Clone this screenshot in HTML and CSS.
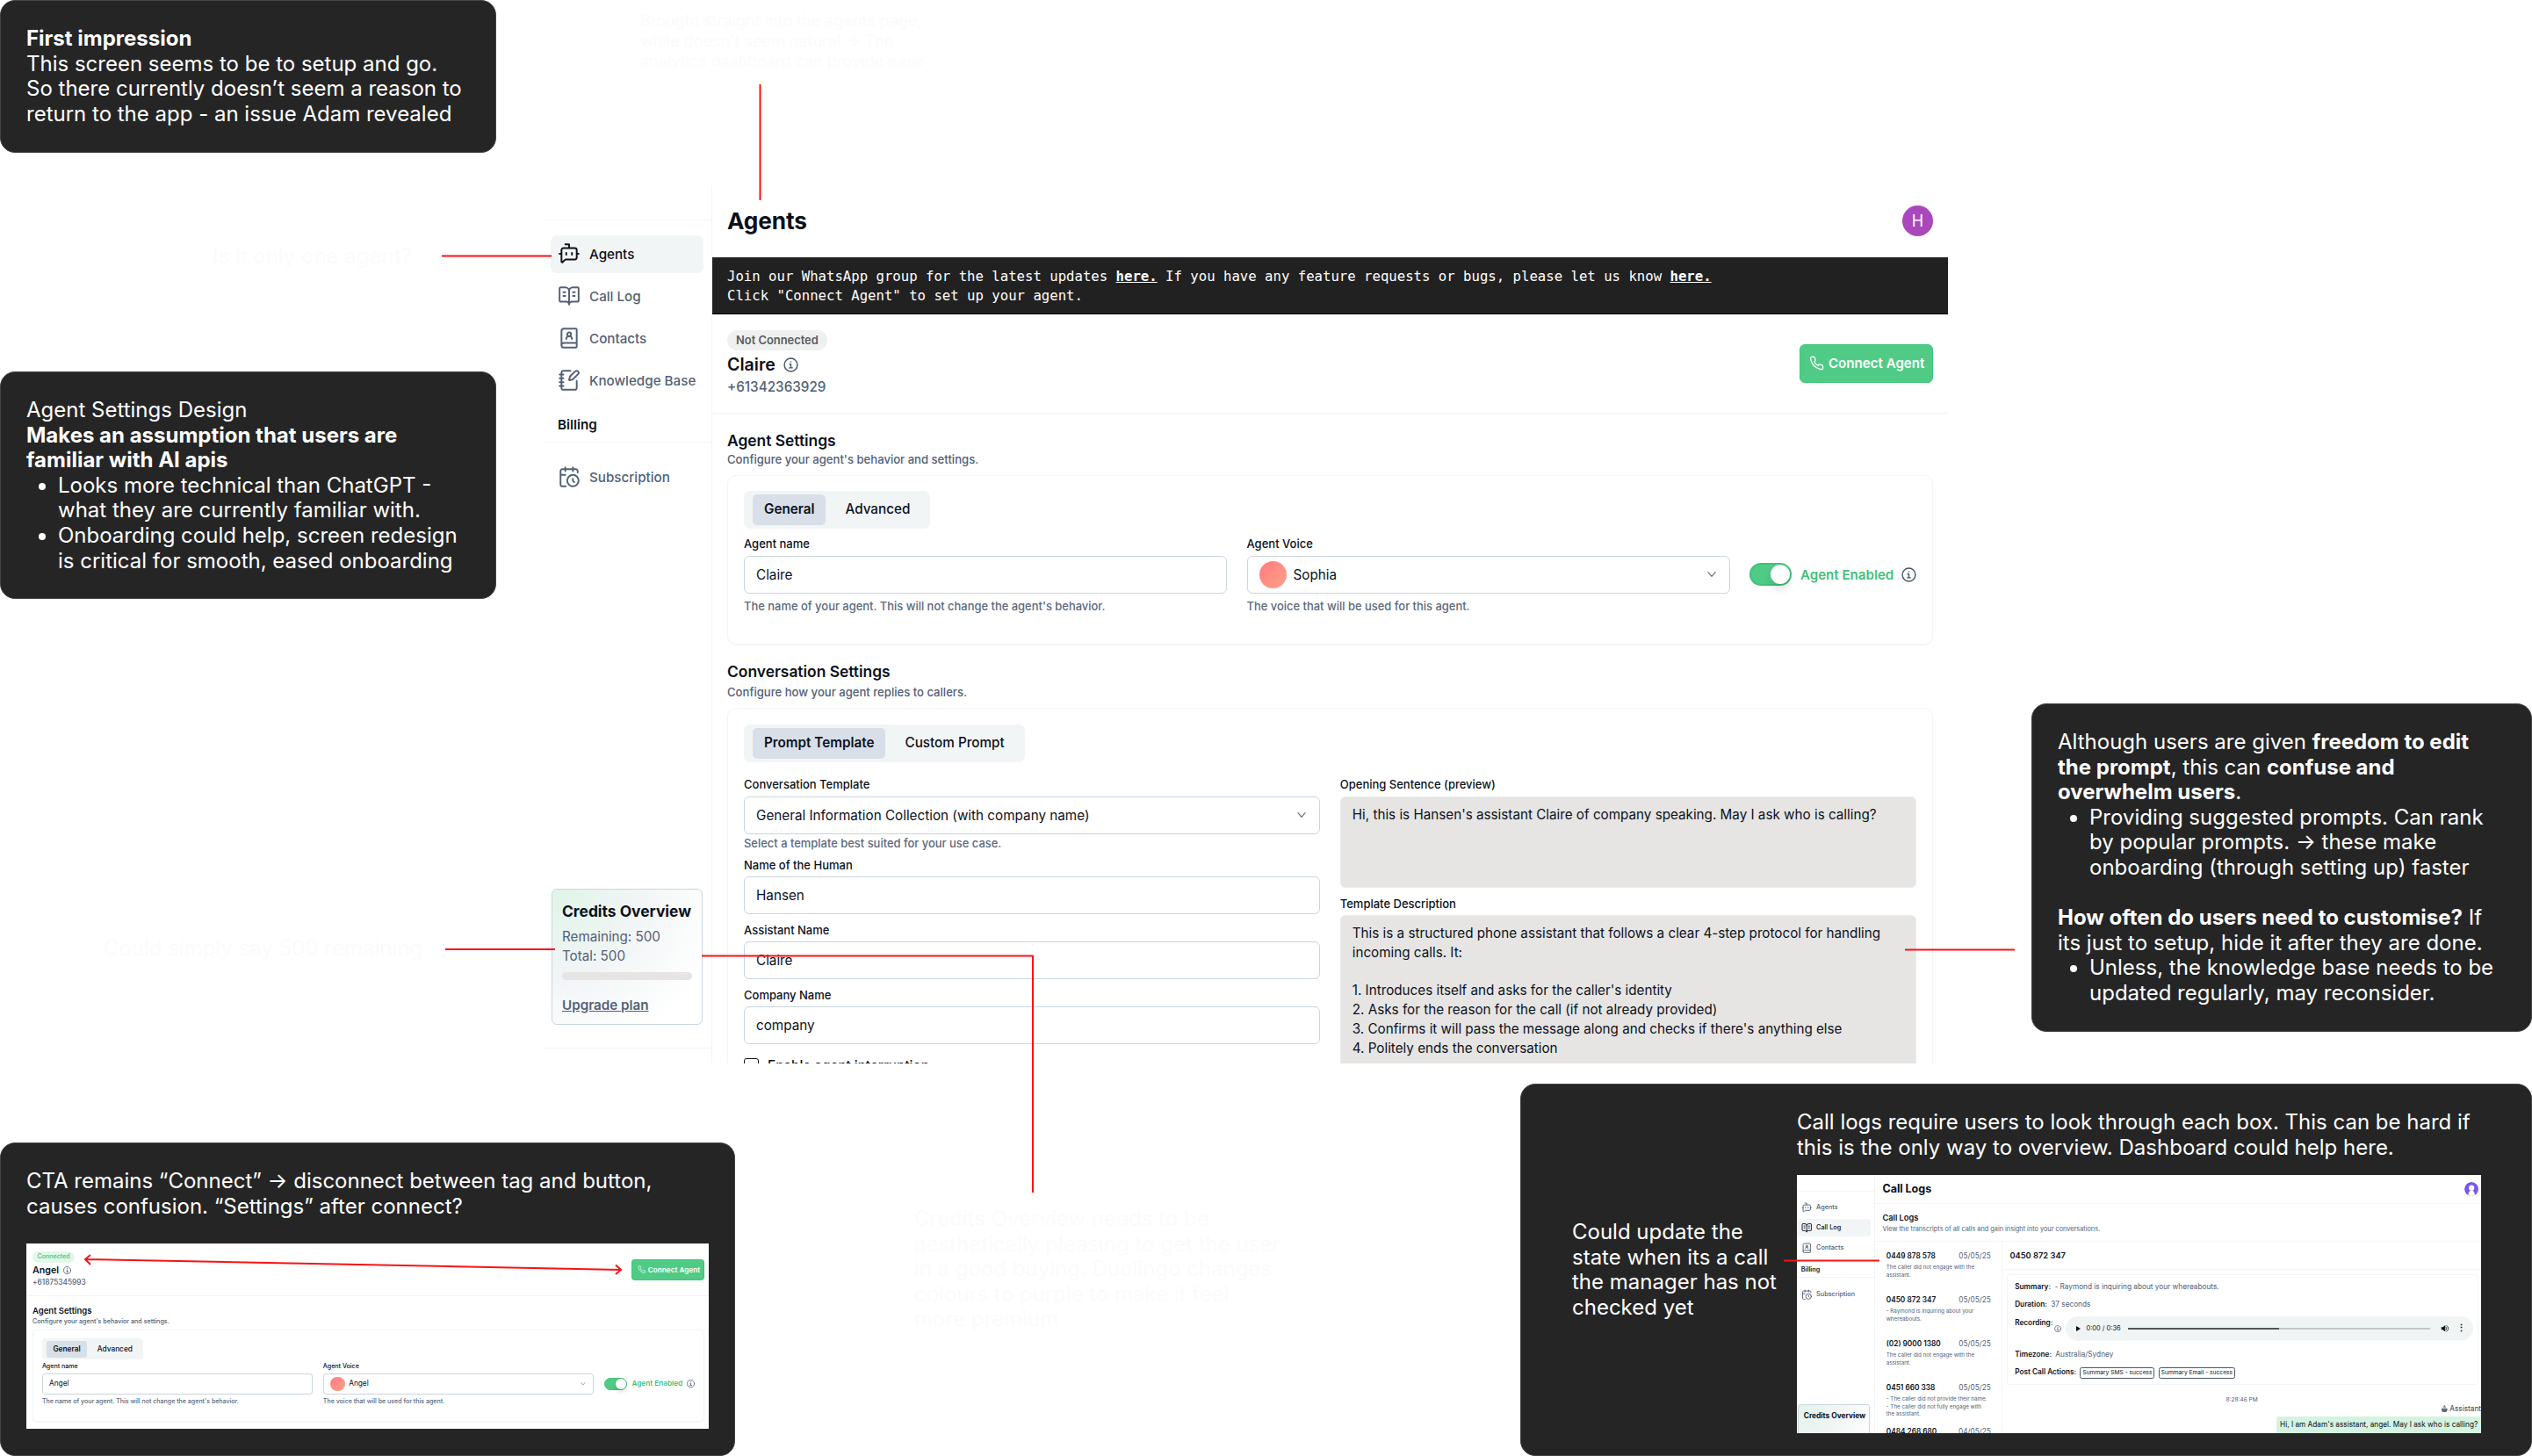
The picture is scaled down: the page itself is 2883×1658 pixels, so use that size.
FILE: index.html
```html
<!DOCTYPE html>
<html lang="en">
<head>
    <meta charset="UTF-8">
    <meta name="viewport" content="width=device-width, initial-scale=1.0">
    <title>Agents screen review</title>
    <link rel="stylesheet" href="styles.css">
</head>
<body>

<!-- icons -->
<svg class="sprite" xmlns="http://www.w3.org/2000/svg">
    <symbol id="bot" viewBox="0 0 24 24"><path d="M12 6V2H8M15 11v2M2 12h2M20 12h2M20 16a2 2 0 0 1-2 2H8.828a2 2 0 0 0-1.414.586l-2.202 2.202A.71.71 0 0 1 4 20.286V8a2 2 0 0 1 2-2h12a2 2 0 0 1 2 2zM9 11v2"/></symbol>
    <symbol id="book" viewBox="0 0 24 24"><path d="M12 7v14M16 12h2M16 8h2M3 18a1 1 0 0 1-1-1V4a1 1 0 0 1 1-1h5a4 4 0 0 1 4 4 4 4 0 0 1 4-4h5a1 1 0 0 1 1 1v13a1 1 0 0 1-1 1h-6a3 3 0 0 0-3 3 3 3 0 0 0-3-3zM6 12h2M6 8h2"/></symbol>
    <symbol id="contacts" viewBox="0 0 24 24"><path d="M15 13a3 3 0 1 0-6 0M4 19.5v-15A2.5 2.5 0 0 1 6.5 2H19a1 1 0 0 1 1 1v18a1 1 0 0 1-1 1H6.5a1 1 0 0 1 0-5H20"/><circle cx="12" cy="8" r="2"/></symbol>
    <symbol id="notebook" viewBox="0 0 24 24"><path d="M13.4 2H6a2 2 0 0 0-2 2v16a2 2 0 0 0 2 2h12a2 2 0 0 0 2-2v-7.4M2 6h4M2 10h4M2 14h4M2 18h4M21.378 5.626a1 1 0 1 0-3.004-3.004l-5.01 5.012a2 2 0 0 0-.506.854l-.837 2.87a.5.5 0 0 0 .62.62l2.87-.837a2 2 0 0 0 .854-.506z"/></symbol>
    <symbol id="calendar" viewBox="0 0 24 24"><path d="M21 7.5V6a2 2 0 0 0-2-2H5a2 2 0 0 0-2 2v14a2 2 0 0 0 2 2h3.5M16 2v4M8 2v4M3 10h5M17.5 17.5 16 16.3V14"/><circle cx="16" cy="16" r="6"/></symbol>
    <symbol id="phone" viewBox="0 0 24 24"><path d="M22 16.92v3a2 2 0 0 1-2.18 2 19.79 19.79 0 0 1-8.63-3.07 19.5 19.5 0 0 1-6-6 19.79 19.79 0 0 1-3.07-8.67A2 2 0 0 1 4.11 2h3a2 2 0 0 1 2 1.72 12.84 12.84 0 0 0 .7 2.81 2 2 0 0 1-.45 2.11L8.09 9.91a16 16 0 0 0 6 6l1.27-1.27a2 2 0 0 1 2.11-.45 12.84 12.84 0 0 0 2.81.7A2 2 0 0 1 22 16.92z"/></symbol>
    <symbol id="info" viewBox="0 0 24 24"><circle cx="12" cy="12" r="10.5"/><path d="M10 11h2v5.5M9.5 16.8h5M11.6 7.2h.8"/></symbol>
    <symbol id="chevron" viewBox="0 0 24 24"><path d="m5 8 7 8 7-8"/></symbol>
    <symbol id="volume" viewBox="0 0 24 24"><path d="M3 9v6h4l5 5V4L7 9z" fill="currentColor"/><path d="M15 8a5 5 0 0 1 0 8M17 4a9 9 0 0 1 0 16"/></symbol>
</svg>

<main class="board">

    <section class="note note-first">
        <p><b>First impression</b></p>
        <p>This screen seems to be to setup and go.<br>So there currently doesn’t seem a reason to<br>return to the app - an issue Adam revealed</p>
    </section>

    <section class="note note-settings">
        <p>Agent Settings Design</p>
        <p><b>Makes an assumption that users are<br>familiar with AI apis</b></p>
        <ul>
            <li>Looks more technical than ChatGPT -<br>what they are currently familiar with.</li>
            <li>Onboarding could help, screen redesign<br>is critical for smooth, eased onboarding</li>
        </ul>
    </section>

    <section class="note note-prompt">
        <p>Although users are given <b>freedom to edit<br>the prompt</b>, this can <b>confuse and<br>overwhelm users</b>.</p>
        <ul>
            <li>Providing suggested prompts. Can rank<br>by popular prompts. → these make<br>onboarding (through setting up) faster</li>
        </ul>
        <p class="spaced"><b>How often do users need to customise?</b> If<br>its just to setup, hide it after they are done.</p>
        <ul>
            <li>Unless, the knowledge base needs to be<br>updated regularly, may reconsider.</li>
        </ul>
    </section>

    <!-- white captions left over from the dark canvas -->
    <p class="ghost ghost-top">Brought straight into the agents page,<br>while doesn't seem natural → The<br>analytics dashboard can provide ease</p>
    <p class="ghost ghost-left">Is it only one agent?</p>
    <p class="ghost ghost-credits">Could simply say 500 remaining</p>
    <p class="ghost ghost-colour">Credits Overview needs to be<br>aesthetically pleasing to get the user<br>in a good buying. Duolingo changes<br>colours to purple to make it feel<br>more premium</p>

    <div class="app">
        <aside class="sidebar">
            <div class="side-top"></div>
            <nav class="nav">
                <a class="nav-item active"><svg class="icon"><use href="#bot"/></svg>Agents</a>
                <a class="nav-item"><svg class="icon"><use href="#book"/></svg>Call Log</a>
                <a class="nav-item"><svg class="icon"><use href="#contacts"/></svg>Contacts</a>
                <a class="nav-item"><svg class="icon"><use href="#notebook"/></svg>Knowledge Base</a>
            </nav>
            <div class="nav-head">Billing</div>
            <nav class="nav">
                <a class="nav-item"><svg class="icon"><use href="#calendar"/></svg>Subscription</a>
            </nav>
            <div class="credits">
                <h4>Credits Overview</h4>
                <p>Remaining: 500</p>
                <p>Total: 500</p>
                <div class="bar"></div>
                <a>Upgrade plan</a>
            </div>
            <div class="side-bottom"></div>
        </aside>

        <div class="content">
            <header class="topbar">
                <h1>Agents</h1>
                <span class="user">H</span>
            </header>
            <div class="banner">Join our WhatsApp group for the latest updates <b>here.</b> If you have any feature requests or bugs, please let us know <b>here.</b><br>Click "Connect Agent" to set up your agent.</div>

            <div class="agent-head">
                <div>
                    <span class="badge">Not Connected</span>
                    <div class="agent-name">Claire <svg class="info"><use href="#info"/></svg></div>
                    <div class="agent-phone">+61342363929</div>
                </div>
                <button class="connect"><svg class="icon"><use href="#phone"/></svg>Connect Agent</button>
            </div>

            <section class="settings">
                <h2>Agent Settings</h2>
                <p class="sub">Configure your agent's behavior and settings.</p>
                <div class="card card-agent">
                    <div class="tabs"><span class="tab on">General</span><span class="tab">Advanced</span></div>
                    <div class="row">
                        <div class="field">
                            <label>Agent name</label>
                            <div class="input">Claire</div>
                            <p class="help">The name of your agent. This will not change the agent's behavior.</p>
                        </div>
                        <div class="field">
                            <label>Agent Voice</label>
                            <div class="input"><i class="voice"></i>Sophia<svg class="chev"><use href="#chevron"/></svg></div>
                            <p class="help">The voice that will be used for this agent.</p>
                        </div>
                        <div class="enabled"><span class="toggle"></span>Agent Enabled<svg class="info"><use href="#info"/></svg></div>
                    </div>
                </div>
            </section>

            <section class="settings conversation">
                <h2>Conversation Settings</h2>
                <p class="sub">Configure how your agent replies to callers.</p>
                <div class="card">
                    <div class="tabs"><span class="tab on">Prompt Template</span><span class="tab">Custom Prompt</span></div>
                    <div class="row">
                        <div class="field">
                            <label>Conversation Template</label>
                            <div class="input">General Information Collection (with company name)<svg class="chev"><use href="#chevron"/></svg></div>
                            <p class="help">Select a template best suited for your use case.</p>
                            <label>Name of the Human</label>
                            <div class="input">Hansen</div>
                            <label>Assistant Name</label>
                            <div class="input">Claire</div>
                            <label>Company Name</label>
                            <div class="input">company</div>
                            <div class="check"><i></i>Enable agent interruption</div>
                        </div>
                        <div class="field">
                            <label>Opening Sentence (preview)</label>
                            <div class="area area-short">Hi, this is Hansen's assistant Claire of company speaking. May I ask who is calling?</div>
                            <label>Template Description</label>
                            <div class="area area-long">This is a structured phone assistant that follows a clear 4-step protocol for handling<br>incoming calls. It:<br><br>1. Introduces itself and asks for the caller's identity<br>2. Asks for the reason for the call (if not already provided)<br>3. Confirms it will pass the message along and checks if there's anything else<br>4. Politely ends the conversation</div>
                        </div>
                    </div>
                </div>
            </section>
        </div>
    </div>

    <section class="note note-cta">
        <p>CTA remains “Connect” → disconnect between tag and button,<br>causes confusion. “Settings” after connect?</p>
        <div class="shot shot-agent">
            <div class="shot-inner">
                <div class="agent-head">
                    <div>
                        <span class="badge good">Connected</span>
                        <div class="agent-name">Angel <svg class="info"><use href="#info"/></svg></div>
                        <div class="agent-phone">+61875345993</div>
                    </div>
                    <button class="connect"><svg class="icon"><use href="#phone"/></svg>Connect Agent</button>
                </div>
                <section class="settings">
                    <h2>Agent Settings</h2>
                    <p class="sub">Configure your agent's behavior and settings.</p>
                    <div class="card card-agent">
                        <div class="tabs"><span class="tab on">General</span><span class="tab">Advanced</span></div>
                        <div class="row">
                            <div class="field">
                                <label>Agent name</label>
                                <div class="input">Angel</div>
                                <p class="help">The name of your agent. This will not change the agent's behavior.</p>
                            </div>
                            <div class="field">
                                <label>Agent Voice</label>
                                <div class="input"><i class="voice"></i>Angel<svg class="chev"><use href="#chevron"/></svg></div>
                                <p class="help">The voice that will be used for this agent.</p>
                            </div>
                            <div class="enabled"><span class="toggle"></span>Agent Enabled<svg class="info"><use href="#info"/></svg></div>
                        </div>
                    </div>
                </section>
            </div>
        </div>
    </section>

    <section class="note note-logs">
        <p class="logs-side">Could update the<br>state when its a call<br>the manager has not<br>checked yet</p>
        <div class="logs-main">
            <p>Call logs require users to look through each box. This can be hard if<br>this is the only way to overview. Dashboard could help here.</p>
            <div class="shot shot-logs">
                <div class="shot-inner">
                    <aside class="sidebar">
                        <div class="side-top"></div>
                        <nav class="nav">
                            <a class="nav-item"><svg class="icon"><use href="#bot"/></svg>Agents</a>
                            <a class="nav-item active"><svg class="icon"><use href="#book"/></svg>Call Log</a>
                            <a class="nav-item"><svg class="icon"><use href="#contacts"/></svg>Contacts</a>
                        </nav>
                        <div class="nav-head">Billing</div>
                        <nav class="nav">
                            <a class="nav-item"><svg class="icon"><use href="#calendar"/></svg>Subscription</a>
                        </nav>
                        <div class="credits"><h4>Credits Overview</h4></div>
                    </aside>
                    <div class="logs">
                        <header class="logs-top">
                            <h1>Call Logs</h1>
                            <svg class="face" viewBox="0 0 34 34"><circle cx="17" cy="17" r="17" fill="#7a56ee"/><circle cx="17" cy="14" r="6.5" fill="#fff"/><path d="M9 34c0-9 3-14 8-14s8 5 8 14z" fill="#fff"/></svg>
                        </header>
                        <div class="logs-title">
                            <h2>Call Logs</h2>
                            <p>View the transcripts of all calls and gain insight into your conversations.</p>
                        </div>
                        <div class="logs-body">
                            <div class="calls">
                                <div class="call"><div><b>0449 878 578</b><span>05/05/25</span></div><p>The caller did not engage with the<br>assistant.</p></div>
                                <div class="call"><div><b>0450 872 347</b><span>05/05/25</span></div><p>- Raymond is inquiring about your<br>whereabouts.</p></div>
                                <div class="call"><div><b>(02) 9000 1380</b><span>05/05/25</span></div><p>The caller did not engage with the<br>assistant.</p></div>
                                <div class="call"><div><b>0451 660 338</b><span>05/05/25</span></div><p>- The caller did not provide their name.<br>- The caller did not fully engage with<br>the assistant.</p></div>
                                <div class="call"><div><b>0484 268 680</b><span>04/05/25</span></div></div>
                            </div>
                            <div class="detail">
                                <h3>0450 872 347</h3>
                                <div class="detail-card">
                                    <div class="line"><b>Summary:</b> - Raymond is inquiring about your whereabouts.</div>
                                    <div class="line"><b>Duration:</b> 37 seconds</div>
                                    <div class="line rec">
                                        <b>Recording:</b>
                                        <svg class="info"><use href="#info"/></svg>
                                        <div class="audio">
                                            <i class="play"></i><span>0:00 / 0:36</span>
                                            <i class="track"></i>
                                            <svg class="vol"><use href="#volume"/></svg>
                                            <span class="dots">⋮</span>
                                        </div>
                                    </div>
                                    <div class="line"><b>Timezone:</b> Australia/Sydney</div>
                                    <div class="line"><b>Post Call Actions:</b> <span class="chip">Summary SMS - success</span><span class="chip">Summary Email - success</span></div>
                                </div>
                                <time>8:28:46 PM</time>
                                <div class="who"><svg viewBox="0 0 16 16"><path d="M2 7h12v3a6 5 0 0 1-12 0z" fill="#5d6b7a"/><path d="M4 6a4 4 0 0 1 8 0z" fill="#7fc7c0"/><circle cx="8" cy="2" r="1.5" fill="#5d6b7a"/></svg>Assistant</div>
                                <div class="bubble">Hi, I am Adam's assistant, angel. May I ask who is calling?</div>
                            </div>
                        </div>
                    </div>
                </div>
            </div>
        </div>
    </section>

    <!-- red connectors on top of everything -->
    <svg class="wires" viewBox="0 0 2883 1658">
        <path d="M865.500 96v132M503 291.500h125M507 1081h125M799 1088.500h377V1358M2169 1081.500h125M2031 1435.500h109"/>
        <path d="M98 1434 707 1446M103 1429l-6 5 6 6M701 1440.500l6 5.500-6 5"/>
    </svg>
</main>

</body>
</html>
```
FILE: styles.css
```css
* {
    box-sizing: border-box;
    margin: 0;
    padding: 0;
}

body {
    font-family: Inter, "Liberation Sans", sans-serif;
    background: #fff;
    color: #0c111b;
}

svg {
    display: block;
    fill: none;
    stroke: currentColor;
    stroke-width: 2;
    stroke-linecap: round;
    stroke-linejoin: round;
}

.sprite {
    position: absolute;
    width: 0;
    height: 0;
}

/* canvas */
.board {
    position: relative;
    width: 2883px;
    height: 1658px;
    overflow: hidden;
}

.note {
    position: absolute;
    background: #252525;
    border: 1.5px solid #444;
    border-radius: 17px;
    color: #fff;
    font-size: 24px;
    line-height: 28.6px;
    padding: 29px;
}

.note > p, .note > ul, .logs-main > p {
    white-space: nowrap;
}

.note ul {
    padding-left: 36px;
}

.note-first {
    left: 0;
    top: 0;
    width: 565px;
    height: 174px;
}

.note-settings {
    left: 0;
    top: 423px;
    width: 565px;
    height: 259px;
}

.note-prompt {
    left: 2313px;
    top: 801px;
    width: 570px;
    height: 374px;
}

.note-cta {
    left: 0;
    top: 1301px;
    width: 837px;
    height: 357px;
}

.note-logs {
    left: 1731px;
    top: 1234px;
    width: 1152px;
    height: 424px;
    display: flex;
}

.spaced {
    margin-top: 28.6px;
}

.logs-side {
    width: 285px;
    flex: none;
    padding-left: 29px;
    padding-top: 125px;
}

.ghost {
    position: absolute;
    color: #fbfbfb;
    font-size: 24px;
    line-height: 28.6px;
    white-space: nowrap;
}

.ghost-top {
    left: 729px;
    top: 12px;
    font-size: 18px;
    line-height: 23px;
}

.ghost-left {
    left: 242px;
    top: 278px;
}

.ghost-credits {
    left: 118px;
    top: 1066px;
}

.ghost-colour {
    left: 1041px;
    top: 1374px;
}

.wires {
    position: absolute;
    left: 0;
    top: 0;
    width: 2883px;
    height: 1658px;
    stroke: #fa1214;
    stroke-linecap: butt;
}

/* app window */
.app {
    position: absolute;
    left: 618px;
    top: 212px;
    width: 1600px;
    height: 999px;
    overflow: hidden;
    display: flex;
}

.sidebar {
    width: 193px;
    flex: none;
    display: flex;
    flex-direction: column;
    border-right: 1.5px solid #f1f5f7;
}

.side-top {
    height: 39px;
    border-bottom: 1.5px solid #f1f5f7;
    margin-bottom: 16.5px;
}

.nav {
    display: flex;
    flex-direction: column;
    gap: 5px;
    padding: 0 9px;
}

.nav-item {
    display: flex;
    align-items: center;
    gap: 10px;
    height: 43px;
    padding-left: 8px;
    border-radius: 7px;
    font-size: 15.2px;
    font-weight: 500;
    color: #526176;
    white-space: nowrap;
}

.nav-item.active {
    background: #f2f5f6;
    color: #0c111b;
}

.icon {
    width: 26px;
    height: 26px;
    stroke-width: 1.8;
}

.nav-head {
    margin-top: 17px;
    padding-left: 17px;
    height: 32px;
    line-height: 24px;
    font-size: 15.2px;
    font-weight: 600;
    border-bottom: 1.5px solid #f1f5f7;
    margin-bottom: 18px;
}

.credits {
    margin: auto 10px 26px;
    height: 155px;
    padding: 12px 11px;
    border: 1.5px solid #cbd5e1;
    border-radius: 6px;
    background: radial-gradient(circle at 0 0, #dff5e7 0, #f2f5f6 45%, #fff 85%);
    font-size: 15.2px;
    line-height: 22px;
    color: #526176;
    white-space: nowrap;
}

.credits h4 {
    font-size: 17.4px;
    line-height: 26px;
    color: #0c111b;
    margin-bottom: 5px;
}

.bar {
    height: 8.5px;
    margin: 7px 0 18px;
    border-radius: 5px;
    background: #e6e5e4;
}

.credits a {
    font-weight: 600;
    text-decoration: underline;
}

.side-bottom {
    height: 18px;
    border-top: 1.5px solid #f1f5f7;
}

.content {
    flex: 1;
    min-width: 0;
}

.topbar {
    height: 81px;
    display: flex;
    align-items: center;
    justify-content: space-between;
    padding: 0 17px;
}

h1 {
    font-size: 26.2px;
    font-weight: 700;
    letter-spacing: -0.1px;
    line-height: 30px;
    margin-top: -2px;
}

.user {
    width: 35px;
    height: 35px;
    border-radius: 50%;
    background: #ab47bc;
    color: #fff;
    font-size: 18px;
    line-height: 35px;
    text-align: center;
    margin-top: -3px;
}

.banner {
    height: 65px;
    padding: 11px 17px;
    background: #212121;
    border-bottom: 1.5px solid #000;
    color: #fff;
    font-family: "DejaVu Sans Mono", monospace;
    font-size: 15.65px;
    line-height: 22px;
    white-space: nowrap;
}

.banner b {
    text-decoration: underline;
}

.agent-head {
    height: 112.5px;
    display: flex;
    align-items: center;
    justify-content: space-between;
    padding: 0 17px;
    border-bottom: 1.5px solid #f1f5f7;
}

.badge {
    display: block;
    width: fit-content;
    padding: 0 10px;
    border-radius: 12px;
    background: #eff1f1;
    color: #5b5b5b;
    font-size: 12.9px;
    font-weight: 600;
    line-height: 23px;
}

.badge.good {
    background: #e3f6ea;
    color: #50cb86;
}

.agent-name {
    display: flex;
    align-items: center;
    gap: 9px;
    margin-top: 4px;
    font-size: 19.6px;
    font-weight: 600;
    line-height: 25px;
}

.agent-phone {
    margin-top: 3px;
    font-size: 15.25px;
    line-height: 20px;
    font-weight: 500;
    color: #526176;
}

.info {
    width: 17px;
    height: 17px;
    color: #45546a;
    stroke-width: 2;
}

.connect {
    display: flex;
    align-items: center;
    gap: 5px;
    width: 152px;
    height: 44px;
    padding-left: 10px;
    border: 1.5px solid #3fc47a;
    border-radius: 6px;
    background: #50cb86;
    color: #fff;
    font: 600 15.1px Inter, sans-serif;
    white-space: nowrap;
}

.connect .icon {
    width: 17px;
    height: 17px;
}

.settings {
    padding: 20px 17px 0;
}

h2 {
    font-size: 17.4px;
    font-weight: 600;
    line-height: 22px;
}

.sub {
    margin: 1px 0 9px;
    font-size: 13.1px;
    line-height: 18px;
    font-weight: 500;
    color: #526176;
}

.conversation .sub {
    margin-top: 3px;
}

.card {
    padding: 17px 18px;
    border: 1.5px solid #f1f5f7;
    border-radius: 10px;
    box-shadow: 0 1px 2px rgba(0, 0, 0, 0.04);
}

.card-agent {
    height: 193px;
}

.conversation .card {
    height: 500px;
    padding-top: 18px;
}

.tabs {
    display: flex;
    gap: 9px;
    width: fit-content;
    height: 43.5px;
    padding: 4.5px 10px;
    border-radius: 7px;
    background: #f2f5f6;
    margin-bottom: 7px;
}

.conversation .tabs {
    margin-bottom: 15px;
}

.tab {
    padding: 0 13px;
    border-radius: 5px;
    font-size: 15.25px;
    line-height: 34.5px;
    font-weight: 500;
}

.tab.on {
    background: #d9dfe8;
    font-weight: 600;
}

.row {
    display: flex;
    gap: 22.5px;
    align-items: flex-start;
}

.field {
    flex: 1;
    min-width: 0;
}

label {
    display: block;
    font-size: 13px;
    line-height: 20px;
    font-weight: 500;
    margin-bottom: 3.5px;
}

.input {
    display: flex;
    align-items: center;
    height: 43px;
    padding: 0 13px;
    margin-bottom: 7.5px;
    border: 1.5px solid #c9d5e1;
    border-radius: 6px;
    background: #fff;
    font-size: 15.25px;
}

.help {
    margin-top: -2px;
    font-size: 12.95px;
    line-height: 18px;
    font-weight: 500;
    color: #5b697d;
}

.conversation .help {
    margin-top: -6.5px;
    margin-bottom: 6px;
}

.chev {
    width: 14px;
    height: 14px;
    margin-left: auto;
    color: #64707f;
}

.voice {
    width: 31px;
    height: 31px;
    margin-right: 8px;
    border-radius: 50%;
    background: linear-gradient(135deg, #ff7a83, #ffa286);
}

.enabled {
    display: flex;
    align-items: center;
    width: 190px;
    height: 43px;
    margin-top: 23.5px;
    font-size: 15.1px;
    font-weight: 600;
    color: #3fc279;
    white-space: nowrap;
}

.enabled .info {
    margin-left: auto;
}

.toggle {
    width: 48px;
    height: 26px;
    margin-right: 10px;
    border-radius: 13px;
    background: #50cb86;
    border: 2px solid #3fc279;
}

.toggle::after {
    content: "";
    display: block;
    width: 22px;
    height: 22px;
    margin-left: auto;
    border-radius: 50%;
    background: #fff;
    box-shadow: 0 6px 10px rgba(0, 0, 0, 0.12);
}

.area {
    padding: 9px 13px;
    margin-bottom: 8px;
    border: 1.5px solid #e9ecec;
    border-radius: 6px;
    background: #e6e5e3;
    font-size: 15.22px;
    line-height: 21.8px;
    white-space: nowrap;
}

.area-short {
    height: 104px;
}

.area-long {
    height: 240px;
}

.check {
    display: flex;
    gap: 10px;
    margin-top: 16px;
    font-size: 15.25px;
    line-height: 17px;
    font-weight: 500;
}

.check i {
    width: 17px;
    height: 17px;
    border: 1.5px solid #0c111b;
    border-radius: 3px;
}

/* pasted screens, same parts drawn smaller */
.shot {
    background: #fff;
    color: #0c111b;
    overflow: hidden;
}

.shot-agent {
    width: 777px;
    height: 211px;
    margin-top: 28px;
}

.shot-agent .shot-inner {
    zoom: 0.545;
}

.shot-agent .agent-head, .shot-agent .settings {
    padding-left: 13px;
    padding-right: 9px;
}

.shot-agent .agent-head {
    height: 110px;
}

.shot-agent .tabs {
    margin-bottom: 6px;
}

.shot-logs {
    width: 779px;
    height: 294px;
    margin-top: 17px;
}

.shot-logs .shot-inner {
    zoom: 0.48;
    display: flex;
    width: 1623px;
    height: 613px;
    font-size: 17.2px;
    line-height: 20px;
}

.shot-logs .sidebar {
    margin-left: -7px;
    height: 724px;
}

.logs {
    flex: 1;
    min-width: 0;
}

.logs-top {
    display: flex;
    align-items: center;
    justify-content: space-between;
    height: 69px;
    padding: 0 6px 0 17px;
    border-bottom: 1.5px solid #f4f7f8;
}

.face {
    width: 34px;
    height: 34px;
    border-radius: 50%;
    stroke: none;
}

.logs-title {
    height: 88px;
    padding: 22px 17px 0;
    border-bottom: 1.5px solid #f4f7f8;
}

.logs-title h2 {
    font-size: 19.2px;
}

.logs-title p {
    margin-top: 5px;
    font-size: 15.3px;
    color: #526176;
}

.logs-body {
    display: flex;
}

.calls {
    width: 302px;
    height: 460px;
    padding: 26px 26px 0;
    border-right: 1.5px solid #f4f7f8;
}

.call {
    height: 104px;
}

.call div {
    display: flex;
    justify-content: space-between;
}

.call b {
    font-weight: 600;
}

.call span {
    color: #526176;
}

.call p {
    margin-top: 8px;
    font-size: 13px;
    line-height: 17.5px;
    color: #526176;
    white-space: nowrap;
}

.detail {
    flex: 1;
    display: flex;
    flex-direction: column;
}

.detail h3 {
    height: 67px;
    padding-left: 17px;
    font-size: 19.4px;
    font-weight: 600;
    line-height: 65px;
    border-bottom: 1.5px solid #f4f7f8;
}

.detail-card {
    margin: 12px 6px 0 11px;
    height: 262px;
    padding: 17px 10px 0 16px;
    border: 1.5px solid #f1f5f7;
    border-radius: 8px;
}

.line {
    display: flex;
    align-items: center;
    gap: 9px;
    height: 20px;
    margin-bottom: 23px;
    color: #526176;
}

.line b {
    font-weight: 600;
    color: #0c111b;
}

.rec {
    gap: 4px;
    height: 55px;
    margin-bottom: 24px;
    margin-top: -4px;
}

.rec b {
    align-self: flex-start;
    line-height: 26px;
}

.audio {
    flex: 1;
    display: flex;
    align-items: center;
    height: 58px;
    margin-left: 6px;
    padding: 0 18px 0 24px;
    border-radius: 29px;
    background: #f1f4f5;
    color: #0c111b;
}

.play {
    border-left: 11px solid #0c111b;
    border-top: 7px solid transparent;
    border-bottom: 7px solid transparent;
    margin-right: 14px;
}

.track {
    flex: 1;
    height: 4px;
    margin: 0 26px 0 18px;
    background: linear-gradient(90deg, #555 50%, #c5c7c8 50%);
}

.vol {
    width: 20px;
    height: 20px;
    margin-right: 16px;
}

.audio span {
    font-size: 15.5px;
}

.audio .dots {
    font-size: 22px;
    font-weight: 700;
}

.chip {
    padding: 0 4px;
    border: 2px solid #4b5563;
    border-radius: 5px;
    color: #0c111b;
    font-size: 13.9px;
    line-height: 24px;
}

time {
    margin-top: 26px;
    text-align: center;
    font-size: 13.7px;
    color: #526176;
}

.who {
    display: flex;
    justify-content: flex-end;
    gap: 4px;
    margin-top: 2px;
    color: #374151;
}

.who svg {
    width: 18px;
    height: 18px;
    stroke: none;
}

.bubble {
    align-self: flex-end;
    margin-top: 7px;
    padding: 0 8px;
    height: 60px;
    line-height: 40px;
    border-radius: 6px 0 0 6px;
    background: #d5f3e1;
    white-space: nowrap;
}
```
